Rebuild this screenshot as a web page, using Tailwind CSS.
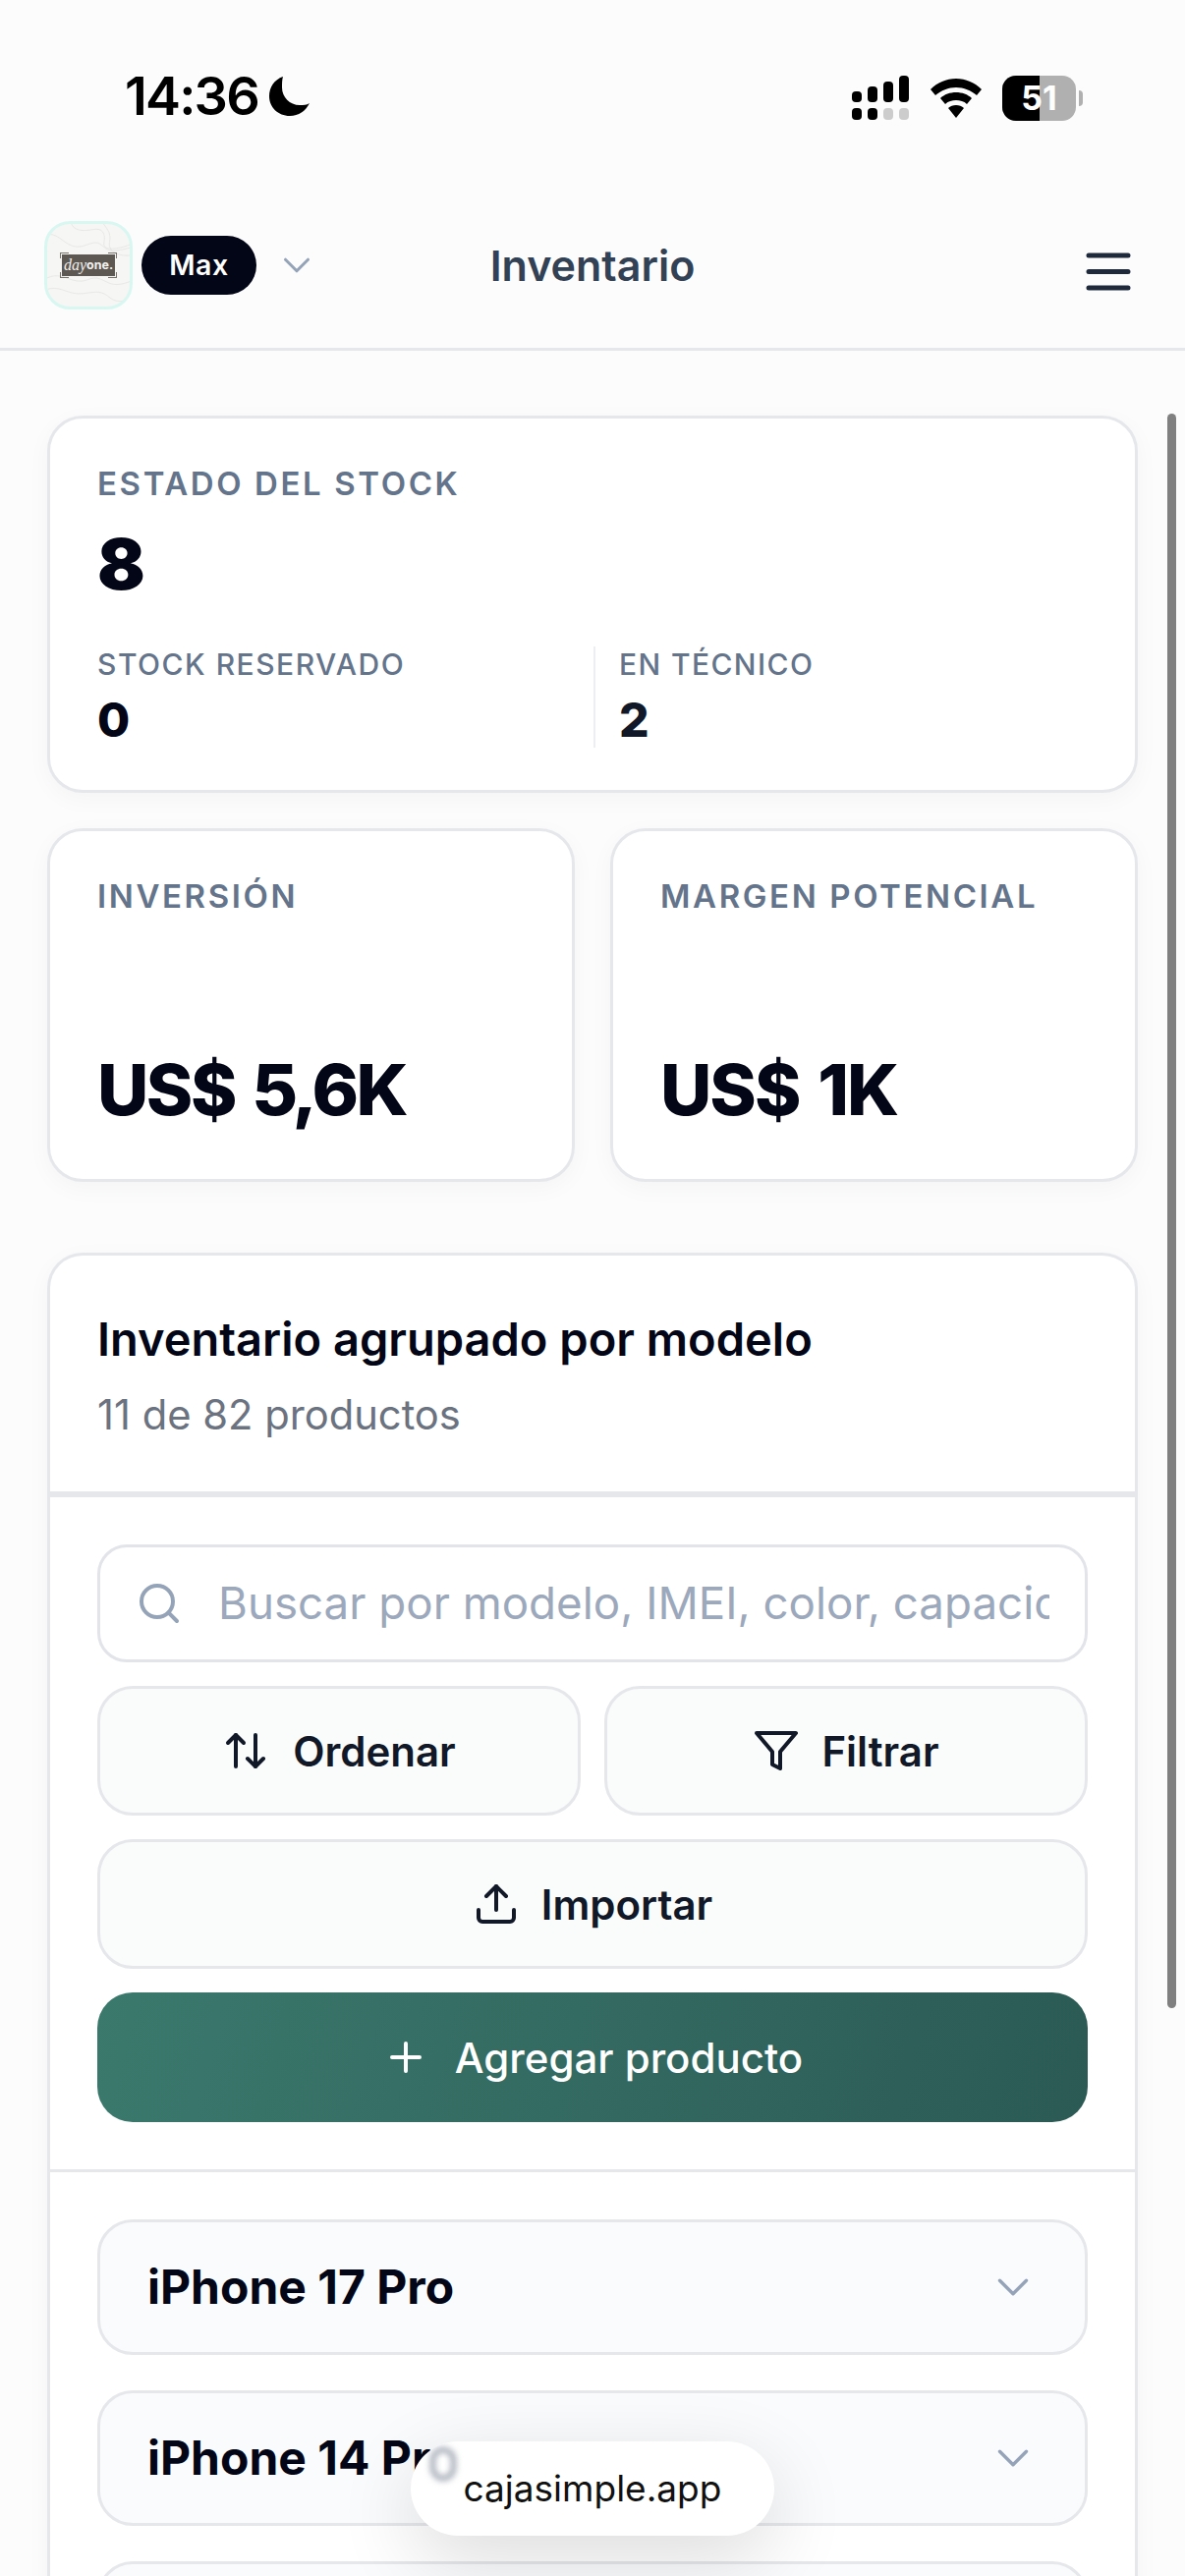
<!DOCTYPE html>
<html lang="es">
<head>
<meta charset="utf-8">
<script src="https://cdn.jsdelivr.net/npm/@tailwindcss/browser@4"></script>
</head>
<body class="bg-[#fcfcfd] font-['Inter','Liberation_Sans',sans-serif]">
<div class="relative h-[2622px] w-[1206px] overflow-hidden bg-[#fcfcfd]">
  <!-- Status bar -->
  <div class="flex h-[186px] items-start justify-between pt-[70px] pr-[104px] pl-[127px]">
    <div class="flex items-center gap-[11px]">
      <span class="text-[54px] leading-[56px] font-semibold tracking-[-1.8px] text-black">14:36</span>
      <svg class="h-[40px] w-[41px]" viewBox="0 0 41 40"><path fill="#000" d="M14 0C5 3 0 11 0 20c0 11 9 20 21 20 9 0 16-5 20-13-3 2-6 2-10 2-10 0-18-8-18-18 0-4 0-8 1-11Z"/></svg>
    </div>
    <div class="mt-[7px] flex items-center gap-[20px]">
      <svg class="h-[46px] w-[60px]" viewBox="0 0 60 46">
        <rect x="0" y="16" width="10" height="11" rx="4" fill="#000"/><rect x="16" y="11" width="10" height="16" rx="4" fill="#000"/><rect x="32" y="6" width="10" height="21" rx="4" fill="#000"/><rect x="48" y="0" width="10" height="27" rx="4" fill="#000"/>
        <rect x="0" y="33" width="10" height="12" rx="4" fill="#000"/><rect x="16" y="33" width="10" height="12" rx="4" fill="#000"/><rect x="32" y="33" width="10" height="12" rx="4" fill="#ccc"/><rect x="48" y="33" width="10" height="12" rx="4" fill="#ccc"/>
      </svg>
      <svg class="h-[40px] w-[52px]" viewBox="0 0 52 40"><path fill="#000" d="M26 0C16 0 7 4 0 11l5 6c6-5 13-8 21-8s15 3 21 8l5-6C45 4 36 0 26 0Zm0 14c-6 0-12 2-16 6l5 6c3-3 7-4 11-4s8 1 11 4l5-6c-4-4-10-6-16-6Zm0 13c-3 0-6 1-8 3l8 10 8-10c-2-2-5-3-8-3Z"/></svg>
      <div class="relative ml-[1px] flex h-[46px] w-[82px] items-center">
        <div class="relative h-[46px] w-[75px] overflow-hidden rounded-[14px] bg-[#b0b0b0]">
          <div class="h-full w-[38px] bg-black"></div>
          <span class="absolute inset-0 text-center text-[34px] leading-[46px] font-bold text-white">51</span>
        </div>
        <div class="ml-[3px] h-[16px] w-[4px] rounded-r-full bg-[#b0b0b0]"></div>
      </div>
    </div>
  </div>
  <!-- Header -->
  <header class="relative flex h-[171px] items-center justify-between border-b-[3px] border-[#e5e7eb] pr-[54px] pl-[45px]">
    <div class="flex items-center">
      <div class="relative flex h-[90px] w-[90px] items-center justify-center overflow-hidden rounded-[26px] border-[3px] border-[#d9f7f1] bg-[#f6f6f4]">
        <svg class="absolute inset-0 h-full w-full" viewBox="0 0 90 90" fill="none" stroke="#e0e0de" stroke-width="0.7">
          <path d="M-2 12c12-4 18 8 30 12s22-8 30-2 8 10 32 4"/><path d="M26-2c2 10 14 10 24 8s14 4 12 14 14 8 30 2"/><path d="M-2 60c14-8 22 0 34 2s16-6 26-2 14 10 34 2"/><path d="M-2 72c14-6 24 4 36 4s20-4 28 0 10 12 30 6"/><path d="M60-2c6 8 10 12 8 22s10 16 24 14"/>
        </svg>
        <div class="relative flex h-[22px] w-[54px] items-center justify-center bg-[#5d5852] text-[#f3f1ee]">
          <span class="font-['Liberation_Serif',serif] text-[16px] leading-none italic">day</span><span class="text-[12.500px] leading-none font-bold">one.</span>
          <div class="absolute top-[-2px] left-[-2px] h-[6px] w-[9px] border-t-[1px] border-l-[1px] border-[#77726c]"></div>
          <div class="absolute top-[-2px] right-[-2px] h-[6px] w-[9px] border-t-[1px] border-r-[1px] border-[#77726c]"></div>
          <div class="absolute bottom-[-2px] left-[-2px] h-[6px] w-[9px] border-b-[1px] border-l-[1px] border-[#77726c]"></div>
          <div class="absolute right-[-2px] bottom-[-2px] h-[6px] w-[9px] border-r-[1px] border-b-[1px] border-[#77726c]"></div>
        </div>
      </div>
      <div class="ml-[9px] flex h-[60px] w-[117px] items-center justify-center rounded-full bg-[#030616] text-[28.500px] font-semibold tracking-[0.5px] text-white">Max</div>
      <svg class="ml-[18px] h-[46px] w-[46px]" viewBox="0 0 24 24" fill="none" stroke="#94a3b8" stroke-width="1.600" stroke-linecap="round" stroke-linejoin="round"><path d="m6 9 6 6 6-6"/></svg>
    </div>
    <h1 class="absolute left-0 w-full text-center text-[43px] leading-none font-semibold text-[#334155]">Inventario</h1>
    <svg class="h-[48px] w-[48px] translate-y-[6px]" viewBox="0 0 48 48" fill="none" stroke="#1e293b" stroke-width="5" stroke-linecap="round"><path d="M4 8h40M4 24.500h40M4 41h40" /></svg>
  </header>
  <!-- Scrollbar -->
  <div class="absolute top-[421px] left-[1188px] h-[1623px] w-[9px] rounded-full bg-[#808080]"></div>
  <!-- Content -->
  <main class="flex flex-col px-[48px] pt-[66px]">
    <section class="h-[384px] rounded-[36px] border-[3px] border-[#e5e7eb] bg-white pt-[48px] pr-[48px] pl-[48px] shadow-[0_6px_24px_rgba(15,23,42,0.035)]">
      <p class="text-[33px] leading-[36px] font-semibold tracking-[2.600px] text-[#64748b]">ESTADO DEL STOCK</p>
      <p class="mt-[24px] text-[72px] leading-[80px] font-black text-[#030616]">8</p>
      <div class="mt-[44px] flex h-[103px]">
        <div class="w-[505px]">
          <p class="text-[30px] leading-[36px] font-medium tracking-[1.500px] text-[#64748b]">STOCK RESERVADO</p>
          <p class="mt-[11px] text-[48px] leading-[56px] font-extrabold text-[#030616]">0</p>
        </div>
        <div class="border-l-[2px] border-[#eceef1] pl-[24px]">
          <p class="text-[30px] leading-[36px] font-medium tracking-[1.400px] text-[#64748b]">EN TÉCNICO</p>
          <p class="mt-[11px] text-[48px] leading-[56px] font-extrabold text-[#111827]">2</p>
        </div>
      </div>
    </section>
    <div class="mt-[36px] grid grid-cols-2 gap-[36px]">
      <section class="flex h-[360px] flex-col justify-between rounded-[36px] border-[3px] border-[#e5e7eb] bg-white pt-[48px] pr-[12px] pb-[51px] pl-[48px] shadow-[0_6px_24px_rgba(15,23,42,0.035)]">
        <p class="text-[33px] leading-[36px] font-semibold tracking-[2.600px] text-[#64748b]">INVERSIÓN</p>
        <p class="text-[72px] leading-[80px] font-extrabold tracking-[-2.500px] [word-spacing:4px] text-[#030616]">US$ 5<span class="mx-[-3px]">,</span>6K</p>
      </section>
      <section class="flex h-[360px] flex-col justify-between rounded-[36px] border-[3px] border-[#e5e7eb] bg-white pt-[48px] pr-[12px] pb-[51px] pl-[48px] shadow-[0_6px_24px_rgba(15,23,42,0.035)]">
        <p class="text-[33px] leading-[36px] font-semibold tracking-[2.600px] text-[#64748b]">MARGEN POTENCIAL</p>
        <p class="text-[72px] leading-[80px] font-extrabold tracking-[-2px] [word-spacing:5px] text-[#030616]">US$ 1K</p>
      </section>
    </div>
    <section class="mt-[72px] rounded-t-[36px] border-x-[3px] border-t-[3px] border-[#e5e7eb] bg-white shadow-[0_6px_24px_rgba(15,23,42,0.035)]">
      <div class="h-[246px] border-b-[6px] border-[#e5e7eb] px-[48px] pt-[57px]">
        <h2 class="text-[47px] leading-[56px] font-semibold text-[#030616]">Inventario agrupado por modelo</h2>
        <p class="mt-[21px] text-[41.700px] leading-[56px] text-[#6b7280]">11 de 82 productos</p>
      </div>
      <div class="flex flex-col gap-[24px] border-b-[3px] border-[#e5e7eb] px-[48px] pt-[48px] pb-[48px]">
        <div class="flex h-[120px] items-center rounded-[30px] border-[3px] border-[#e2e4ea] bg-white pl-[36px]">
          <svg class="h-[48px] w-[48px] shrink-0" viewBox="0 0 24 24" fill="none" stroke="#94a3b8" stroke-width="2" stroke-linecap="round" stroke-linejoin="round"><circle cx="11" cy="11" r="8"/><path d="m21 21-4.300-4.300"/></svg>
          <div class="ml-[36px] w-[846px] overflow-hidden text-[45.700px] leading-[56px] whitespace-nowrap text-[#9ca8bc]">Buscar por modelo, IMEI, color, capacidad</div>
        </div>
        <div class="grid grid-cols-2 gap-[24px]">
          <button class="flex h-[132px] items-center justify-center gap-[24px] rounded-[36px] border-[3px] border-[#e5e7eb] bg-[#fafbfb] text-[42px] font-semibold text-[#111827]">
            <svg class="h-[48px] w-[48px]" viewBox="0 0 24 24" fill="none" stroke="#111827" stroke-width="2" stroke-linecap="round" stroke-linejoin="round"><path d="m21 16-4 4-4-4"/><path d="M17 20V4"/><path d="m3 8 4-4 4 4"/><path d="M7 4v16"/></svg>
            Ordenar
          </button>
          <button class="flex h-[132px] items-center justify-center gap-[22px] rounded-[36px] border-[3px] border-[#e5e7eb] bg-[#fafbfb] text-[42px] font-semibold text-[#111827]">
            <svg class="h-[48px] w-[48px]" viewBox="0 0 24 24" fill="none" stroke="#111827" stroke-width="2" stroke-linecap="round" stroke-linejoin="round"><polygon points="22 3 2 3 10 12.46 10 19 14 21 14 12.46 22 3"/></svg>
            Filtrar
          </button>
        </div>
        <button class="flex h-[132px] items-center justify-center gap-[22px] rounded-[36px] border-[3px] border-[#e5e7eb] bg-[#fafbfb] text-[42px] font-semibold text-[#111827]">
          <svg class="h-[48px] w-[48px]" viewBox="0 0 24 24" fill="none" stroke="#111827" stroke-width="2" stroke-linecap="round" stroke-linejoin="round"><path d="M21 15v4a2 2 0 0 1-2 2H5a2 2 0 0 1-2-2v-4"/><path d="m17 8-5-5-5 5"/><path d="M12 3v12"/></svg>
          Importar
        </button>
        <button class="flex h-[132px] items-center justify-center gap-[26px] rounded-[36px] bg-linear-105 from-[#3b796d] to-[#2b5a54] text-[42px] font-medium text-white">
          <svg class="h-[48px] w-[48px]" viewBox="0 0 24 24" fill="none" stroke="#fff" stroke-width="2" stroke-linecap="round"><path d="M5 12h14M12 5v14"/></svg>
          Agregar producto
        </button>
      </div>
      <div class="flex flex-col gap-[36px] px-[48px] pt-[48px]">
        <div class="flex h-[138px] items-center justify-between rounded-[36px] border-[3px] border-[#e5e7eb] bg-[#fafbfd] pr-[46px] pl-[48px]">
          <span class="text-[48px] font-bold text-[#030616]">iPhone 17 Pro</span>
          <svg class="h-[54px] w-[54px]" viewBox="0 0 24 24" fill="none" stroke="#94a3b8" stroke-width="1.500" stroke-linecap="round" stroke-linejoin="round"><path d="m6 9 6 6 6-6"/></svg>
        </div>
        <div class="flex h-[138px] items-center justify-between rounded-[36px] border-[3px] border-[#e5e7eb] bg-[#fafbfd] pr-[46px] pl-[48px]">
          <span class="text-[48px] font-bold text-[#030616]">iPhone 14 Pro</span>
          <svg class="h-[54px] w-[54px]" viewBox="0 0 24 24" fill="none" stroke="#94a3b8" stroke-width="1.500" stroke-linecap="round" stroke-linejoin="round"><path d="m6 9 6 6 6-6"/></svg>
        </div>
        <div class="h-[138px] rounded-[36px] border-[3px] border-[#e5e7eb] bg-[#fafbfd]"></div>
      </div>
    </section>
  </main>
  <!-- URL pill -->
  <div class="absolute top-[2485px] left-[418px] flex h-[96px] w-[370px] items-center justify-center overflow-hidden rounded-full bg-white text-[37px] text-[#111] shadow-[0_24px_80px_rgba(0,0,0,0.14)]">
    <div class="absolute top-[6px] left-[20px] h-[34px] w-[26px] rounded-full border-[5px] border-[#9ca3af] blur-[3px]"></div>
    cajasimple.app
  </div>
</div>
</body>
</html>
